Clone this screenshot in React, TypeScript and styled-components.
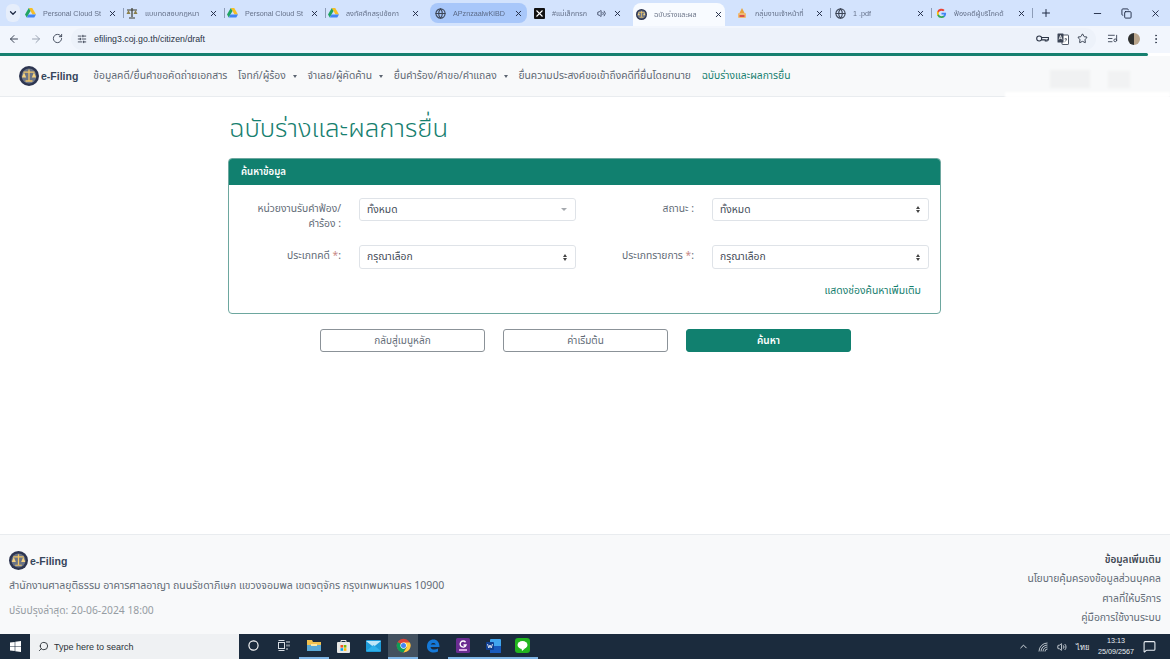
import React from "react";
import styled, { createGlobalStyle } from "styled-components";
import { ArrowLeft, ArrowRight, RotateCw, SlidersHorizontal, Star, ListMusic, EllipsisVertical, X, Plus, Minus, Copy, Volume2, Globe, Search, ChevronUp, MessageSquare, Circle, ChevronDown } from "lucide-react";

const thai = `"Noto Sans Thai", "Noto Sans", "Open Sans", "DejaVu Sans", sans-serif`;

const Global = createGlobalStyle`
  html, body { margin: 0; padding: 0; background: #fff; }
  * { box-sizing: border-box; }
  body { font-family: ${thai}; overflow: hidden; }
`;

const Page = styled.div`
  width: 1170px; height: 659px; display: flex; flex-direction: column; overflow: hidden;
`;
const TabStrip = styled.div`
  height: 26px; background: #d3e3fd; display: flex; align-items: center; padding-left: 6px;
`;
const Chevron = styled.div`
  width: 14px; height: 18px; color: #1f2a44; display: flex; align-items: center; justify-content: center;
  background: #e6eefb; border-radius: 6px;
`;
const Tab = styled.div<{ $active?: boolean; $hl?: boolean; $pad: number; $sep?: boolean }>`
  position: relative; flex: none;
  width: ${p => (p.$active ? "92px" : p.$hl ? "97px" : "101px")};
  margin-left: ${p => (p.$active ? "7px" : p.$hl ? "6px" : "0")};
  margin-right: ${p => (p.$active ? "2px" : p.$hl ? "-2px" : "0")};
  height: ${p => (p.$active ? "23px" : "20px")}; margin-top: ${p => (p.$active ? "3px" : "0")};
  display: flex; align-items: center; gap: 7px; padding: 0 ${p => (p.$active ? 2 : 4)}px 0 ${p => p.$pad}px; font-size: 7.2px; color: #47526a;
  white-space: nowrap; font-family: "Liberation Sans", ${thai};
  background: ${p => (p.$active ? "#f8fbff" : p.$hl ? "#a8c7fa" : "transparent")};
  border-radius: ${p => (p.$active ? "8px 8px 0 0" : p.$hl ? "8px" : "0")};
  &::after {
    content: ""; display: ${p => (p.$sep ? "block" : "none")}; position: absolute; right: -3px; top: 5px; height: 10px; width: 1px; background: #8d9db8;
  }
  svg { flex: none; }
`;
const TabTitle = styled.span`
  flex: 1; min-width: 0; opacity: .8;
`;
const TabClose = styled(X)`
  width: 9px; height: 9px; color: #1f2a44; stroke-width: 2.5;
`;
const TabPlus = styled(Plus)`
  width: 12px; height: 12px; color: #1f2a44; margin-left: 10px;
`;
const WindowBtns = styled.div`
  margin-left: auto; display: flex; align-items: center; gap: 18px; padding-right: 9px; color: #1f2a44;
  svg { width: 11px; height: 11px; }
`;
const Toolbar = styled.div`
  height: 27px; background: #f2f6fd; display: flex; align-items: center; padding: 0 0 2px 8px; color: #3c4556;
  svg { flex: none; }
`;
const ToolGroup = styled.div`
  display: flex; align-items: center; gap: 10px;
`;
const UrlBar = styled.div`
  flex: 1; height: 22px; margin: 0 8px 0 8px; border-radius: 11px; display: flex; align-items: center;
  gap: 7px; padding: 0 8px 0 6px; background: #edf2fa; font-size: 8.8px; color: #2b3445; font-family: "Liberation Sans", sans-serif;
`;
const UrlEnd = styled.div`
  margin-left: auto; display: flex; align-items: center; gap: 8px;
`;
const ToolEnd = styled.div`
  display: flex; align-items: center; gap: 10px; padding-right: 8px; margin-left: 3px;
`;
const Avatar = styled.span`
  width: 12px; height: 12px; border-radius: 50%; background: linear-gradient(90deg, #2f3130 50%, #b9a58c 50%);
`;
const GreenLine = styled.div`
  height: 3px; background: #17806f; margin-right: 22px; border-radius: 0 2px 2px 0;
`;
const Nav = styled.nav`
  height: 41px; background: #f8f9fa; border-bottom: 1px solid #e9ecef; display: flex; align-items: center;
  padding-left: 19px; position: relative;
`;
const Brand = styled.div`
  display: flex; align-items: center; gap: 2px; font: bold 10.5px "Liberation Sans", sans-serif; color: #36465c;
`;
const NavLinks = styled.div`
  display: flex; align-items: center; margin-left: 15px; gap: 10.7px;
`;
const NavLink = styled.span<{ $on?: boolean }>`
  font-size: 10.3px; color: ${p => (p.$on ? "#17806f" : "#5f6873")}; display: flex; align-items: center; gap: 7px; white-space: nowrap;
`;
const Caret = styled.i`
  width: 0; height: 0; border-left: 2.5px solid transparent; border-right: 2.5px solid transparent; border-top: 3px solid #5b6470;
`;
const Smudge = styled.div<{ $x: number; $w: number; $y: number; $h: number; $c: string }>`
  position: absolute; left: ${p => p.$x}px; width: ${p => p.$w}px; top: ${p => p.$y}px; height: ${p => p.$h}px; background: ${p => p.$c}; filter: blur(1px);
`;
const Main = styled.main`
  flex: 1; width: 713px; margin-left: 228px; display: flex; flex-direction: column; min-height: 0;
`;
const Title = styled.h1`
  margin: 16px 0 12px; font-size: 25.7px; line-height: 33px; font-weight: 300; color: #17806f; padding-left: 1px; white-space: nowrap;
`;
const Card = styled.section`
  height: 156px; border: 1px solid #6da79f; border-radius: 4px; display: flex; flex-direction: column; overflow: hidden;
`;
const CardHead = styled.div`
  height: 27px; margin: -1px -1px 0; background: #11806f; color: #fff; font-size: 9.6px; font-weight: 600; padding: 0 13px; display: flex; align-items: center;
`;
const FormGrid = styled.div`
  display: grid; grid-template-columns: 100px 217px 100px 217px; column-gap: 18px; row-gap: 13px; padding: 13px 0 0 12px;
`;
const Label = styled.label`
  font-size: 10.3px; line-height: 15px; color: #636c77; text-align: right; padding-top: 4px; white-space: nowrap;
`;
const Star2 = styled.span`
  color: #c98a88;
`;
const Select = styled.div<{ $h?: number }>`
  height: ${p => p.$h ?? 23}px; border: 1px solid #dfe3e8; border-radius: 3px; background: #fff; display: flex; align-items: center; justify-content: space-between;
  padding: 0 8px 0 7px; font-size: 10.3px; color: #444c58;
`;
const UpDown = styled.span`
  display: flex; flex-direction: column; gap: 1px;
  &::before, &::after { content: ""; width: 0; height: 0; border-left: 2.5px solid transparent; border-right: 2.5px solid transparent; }
  &::before { border-bottom: 3px solid #444; }
  &::after { border-top: 3px solid #444; }
`;
const DownOnly = styled.span`
  width: 0; height: 0; border-left: 3px solid transparent; border-right: 3px solid transparent; border-top: 3px solid #a5a9ae;
`;
const MoreLink = styled.div`
  font-size: 10.4px; color: #17806f; text-align: right; padding: 14px 19px 0 0;
`;
const Actions = styled.div`
  display: flex; justify-content: center; gap: 18px; margin-top: 15px; padding-left: 2px;
`;
const Button = styled.div<{ $primary?: boolean }>`
  width: 165px; height: 23px; border-radius: 3px; display: flex; align-items: center; justify-content: center; font-size: 10px;
  border: 1px solid ${p => (p.$primary ? "#11806f" : "#8b9298")};
  background: ${p => (p.$primary ? "#11806f" : "#fff")};
  color: ${p => (p.$primary ? "#fff" : "#636c77")};
  font-weight: ${p => (p.$primary ? 600 : 400)};
`;
const Footer = styled.footer`
  height: 100px; flex: none; background: #f8f9fa; border-top: 1px solid #e9ecef; display: flex; justify-content: space-between; padding: 16px 9px 0 9px;
`;
const FootLeft = styled.div`
  display: flex; flex-direction: column; align-items: flex-start;
`;
const Address = styled.div`
  font-size: 10.5px; color: #636c77; margin-top: 8px; line-height: 16px;
`;
const Updated = styled.div`
  font-size: 10.3px; color: #969ca3; margin-top: 9px; line-height: 16px;
`;
const FootRight = styled.div`
  display: flex; flex-direction: column; align-items: flex-end; gap: 4px; font-size: 10.35px; line-height: 15.5px; color: #636c77; margin-top: 1.5px;
`;
const FootHead = styled.b`
  font-weight: 600; color: #3f4853; font-size: 10px;
`;
const Taskbar = styled.div`
  height: 25px; flex: none; background: #1b2b3d; display: flex; align-items: center; color: #fff;
`;
const StartBtn = styled.div`
  width: 30px; height: 25px; display: flex; align-items: center; justify-content: center;
`;
const SearchBox = styled.div`
  width: 209px; height: 25px; background: #eff1f3; color: #2c3238; display: flex; align-items: center; gap: 5px; padding-left: 8px;
  font: 9px "Liberation Sans", sans-serif;
`;
const TaskIcons = styled.div`
  display: flex; align-items: center; height: 25px;
`;
const TaskItem = styled.div<{ $on?: boolean; $run?: boolean }>`
  width: 29.9px; height: 25px; display: flex; align-items: center; justify-content: center;
  background: ${p => (p.$on ? "#43515f" : "transparent")};
  border-bottom: 2px solid ${p => (p.$run ? "#7eb5e6" : "transparent")};
`;
const Tray = styled.div`
  margin-left: auto; display: flex; align-items: center; gap: 9px; padding-right: 14px; font: 7.5px "Liberation Sans", "Noto Sans", sans-serif; color: #e8edf2;
`;
const Clock = styled.div`
  text-align: center; line-height: 10.5px; font-size: 7.2px; width: 36px;
`;

const Logo = ({ size }: { size: number }) => (
  <svg width={size} height={size} viewBox="0 0 20 20">
    <circle cx="10" cy="10" r="10" fill="#2d3550" />
    <circle cx="10" cy="10" r="7.4" fill="#6b7486" />
    <path d="M10 3.5v11M4.5 6.2h11M6.500 15h7" stroke="#f0c466" strokeWidth="1.3" fill="none" />
    <path d="M2.800 11.500 5 6.200 7.200 11.500Z M12.800 11.500 15 6.200 17.200 11.500Z" fill="#f5d27e" />
  </svg>
);
const Drive = () => (
  <svg width="11" height="10" viewBox="0 0 22 20">
    <path d="M7.500 0h7L22 13h-7z" fill="#f6bf26" />
    <path d="M7.500 0 0 13l3.500 6 7.500-13z" fill="#1fa463" />
    <path d="M3.500 19h15l3.500-6H7z" fill="#4285f4" />
  </svg>
);
const Scale = () => (
  <svg width="12" height="12" viewBox="0 0 12 12">
    <path d="M6 1v9M1 3h10M3 11h6" stroke="#3a3a2c" strokeWidth="1.2" />
    <path d="M.5 7 2.500 3 4.500 7ZM7.500 7 9.500 3 11.500 7Z" fill="#8a7f4a" />
  </svg>
);
const XLogo = () => (
  <svg width="11" height="11" viewBox="0 0 11 11">
    <rect width="11" height="11" rx="1" fill="#111" />
    <path d="M2.500 2.500 8.500 8.500M8.500 2.500 2.500 8.500" stroke="#fff" strokeWidth="1.1" />
  </svg>
);
const Temple = () => (
  <svg width="12" height="12" viewBox="0 0 12 12">
    <path d="M6 1 8.500 6h-5z" fill="#e6a23c" />
    <rect x="2" y="6" width="8" height="5" rx="1" fill="#efbb72" />
    <rect x="3.500" y="8" width="5" height="2" fill="#d9534f" />
  </svg>
);
const GLogo = () => (
  <svg width="11" height="11" viewBox="0 0 24 24">
    <path d="M22 12.200c0-.7-.1-1.400-.2-2H12v3.900h5.600a4.800 4.800 0 0 1-2.100 3.100v2.600h3.300c2-1.800 3.200-4.500 3.200-7.600z" fill="#4285f4" />
    <path d="M12 22c2.800 0 5.100-.9 6.800-2.500l-3.300-2.600c-.9.600-2.100 1-3.500 1-2.700 0-5-1.800-5.800-4.300H2.800v2.600A10 10 0 0 0 12 22z" fill="#34a853" />
    <path d="M6.200 13.600a6 6 0 0 1 0-3.800V7.200H2.800a10 10 0 0 0 0 9z" fill="#fbbc05" />
    <path d="M12 5.800c1.500 0 2.800.5 3.900 1.500L18.800 4.400A10 10 0 0 0 2.800 7.200l3.400 2.600C7 7.500 9.300 5.800 12 5.800z" fill="#ea4335" />
  </svg>
);
const SiteGlobe = () => <Globe size={11} color="#3c4556" strokeWidth={2.4} />;

const PasswordKey = () => (
  <svg width="13" height="9" viewBox="0 0 13 9" fill="none" stroke="currentColor" strokeWidth="1.1">
    <circle cx="3.200" cy="4.500" r="2.500" />
    <path d="M5.700 3.500h6.700v2.400H11V7H9.300V5.900H5.700" />
  </svg>
);
const TranslateIcon = () => (
  <svg width="12" height="12" viewBox="0 0 12 12">
    <rect x="5" y="2" width="6.500" height="9.500" rx=".6" fill="#fff" stroke="#3c4556" strokeWidth=".9" />
    <rect x=".5" y=".5" width="6" height="9" rx=".6" fill="#3c4556" />
    <path d="M2 6.500 3.500 2.500 5 6.500M2.500 5.300h2" stroke="#fff" strokeWidth=".8" fill="none" />
    <path d="M7.500 6h2.500M8.700 5v1M9.500 6c-.3 1.500-1 2.300-1.800 2.800" stroke="#3c4556" strokeWidth=".7" fill="none" />
  </svg>
);

const WinLogo = () => (
  <svg width="11" height="11" viewBox="0 0 11 11" fill="#fff">
    <path d="M0 1.600 4.700.9v4.300H0zM5.300.8 11 0v5.200H5.300zM0 5.800h4.700v4.300L0 9.400zM5.300 5.800H11V11l-5.700-.8z" />
  </svg>
);
const TaskView = () => (
  <svg width="12" height="11" viewBox="0 0 12 11" fill="none" stroke="#d7dde3" strokeWidth="1">
    <rect x=".5" y="2.500" width="6" height="6" />
    <path d="M.5.500h6M.5 10.500h6M9 1v2M9 4.500v2M9 8v2M11 1v2M11 4.500v2" />
  </svg>
);
const Explorer = () => (
  <svg width="14" height="13" viewBox="0 0 14 13">
    <path d="M0 1h5l1 2h8v9H0z" fill="#f2c14e" />
    <rect x="0" y="6" width="14" height="6" fill="#5aa9d6" />
    <rect x="4" y="5" width="6" height="2" fill="#fbe7a5" />
  </svg>
);
const StoreIcon = () => (
  <svg width="13" height="14" viewBox="0 0 13 14">
    <rect y="3" width="13" height="11" rx="1" fill="#e8e8e6" />
    <path d="M4 4V1.500h5V4" fill="none" stroke="#e8e8e6" />
    <rect x="3.500" y="6" width="2.600" height="2.600" fill="#f25022" /><rect x="6.800" y="6" width="2.600" height="2.600" fill="#7fba00" />
    <rect x="3.500" y="9.200" width="2.600" height="2.600" fill="#00a4ef" /><rect x="6.800" y="9.200" width="2.600" height="2.600" fill="#ffb900" />
  </svg>
);
const Mail = () => (
  <svg width="15" height="12" viewBox="0 0 15 12">
    <rect width="15" height="12" rx="1" fill="#1e9bd8" />
    <path d="M0 1 7.500 7 15 1" fill="#bfe6f8" />
    <path d="M0 11 7.500 5 15 11" fill="#2fb1ea" />
  </svg>
);
const Chrome = () => (
  <svg width="15" height="15" viewBox="0 0 24 24">
    <circle cx="12" cy="12" r="11" fill="#db4437" />
    <path d="M12 12 2.500 6.500A11 11 0 0 0 12 23l5-8z" fill="#0f9d58" />
    <path d="M12 7h10.200A11 11 0 0 1 12 23l5-8z" fill="#ffcd40" />
    <circle cx="12" cy="12" r="5" fill="#fff" /><circle cx="12" cy="12" r="4" fill="#4285f4" />
  </svg>
);
const Edge = () => (
  <svg width="14" height="14" viewBox="0 0 14 14">
    <path d="M1 7.500C1 3 4 .5 7.500.5 11 .5 13.500 3 13.500 8H4.500c.3 2.600 4 3.400 7.500 1.600v3C8 14.500 1 13.500 1 7.500zM4.600 5.600h5.200C9.500 3.400 5.400 3.400 4.600 5.600z" fill="#1579d8" />
  </svg>
);
const AppG = () => (
  <svg width="14" height="15" viewBox="0 0 14 15">
    <rect width="14" height="15" rx="1.500" fill="#6a2c91" />
    <path d="M9.500 4.200A3 3 0 1 0 10 7H7.500" fill="none" stroke="#fff" strokeWidth="1.400" />
    <rect x="3" y="11" width="8" height="2" fill="#d9a6e8" />
  </svg>
);
const Word = () => (
  <svg width="15" height="14" viewBox="0 0 15 14">
    <rect x="4" width="11" height="14" rx="1" fill="#41a5ee" />
    <rect x="4" y="7" width="11" height="7" fill="#185abd" />
    <rect y="3" width="8" height="8" rx="1" fill="#103f91" />
    <path d="M1.500 5 2.800 9 4 6 5.200 9 6.500 5" stroke="#fff" strokeWidth=".8" fill="none" />
  </svg>
);
const LineApp = () => (
  <svg width="15" height="15" viewBox="0 0 15 15">
    <rect width="15" height="15" rx="3" fill="#21b51f" />
    <ellipse cx="7.500" cy="7" rx="5" ry="4" fill="#fff" />
    <path d="M6.500 10.500 7 13l3-2.500z" fill="#fff" />
  </svg>
);
const Signal = () => (
  <svg width="10" height="10" viewBox="0 0 10 10" fill="none" stroke="#cfd6dd" strokeWidth=".9">
    <path d="M1 9.500A8.500 8.500 0 0 1 9.500 1M3 9.500A6.500 6.500 0 0 1 9.500 3M5 9.500A4.500 4.500 0 0 1 9.500 5M7 9.500A2.500 2.500 0 0 1 9.500 7" />
  </svg>
);

const tabs: { icon: React.ReactNode; title: string; pad: number; active?: boolean; hl?: boolean; sound?: boolean; sep?: boolean }[] = [
  { icon: <Drive />, title: "Personal Cloud St", pad: 5, sep: true },
  { icon: <Scale />, title: "แบบทดสอบกฎหมา", pad: 5, sep: true },
  { icon: <Drive />, title: "Personal Cloud St", pad: 5, sep: true },
  { icon: <Drive />, title: "ลงทัศศึกสรุปข้อกา", pad: 5 },
  { icon: <SiteGlobe />, title: "APznzaalwKiBD", pad: 5, hl: true },
  { icon: <XLogo />, title: "#แม่เล็กทรก", pad: 9, sound: true },
  { icon: <Logo size={11} />, title: "ฉบับร่างและผล", pad: 3, active: true },
  { icon: <Temple />, title: "กลุ่มงานเจ้าหน้าที่", pad: 9, sep: true },
  { icon: <SiteGlobe />, title: "1 .pdf", pad: 7, sep: true },
  { icon: <GLogo />, title: "ฟ้องคดีผู้บริโภคด้", pad: 7, sep: true },
];

const menu: { label: string; caret?: boolean; on?: boolean }[] = [
  { label: "ข้อมูลคดี/ยื่นคำขอคัดถ่ายเอกสาร" },
  { label: "โจทก์/ผู้ร้อง", caret: true },
  { label: "จำเลย/ผู้คัดค้าน", caret: true },
  { label: "ยื่นคำร้อง/คำขอ/คำแถลง", caret: true },
  { label: "ยื่นความประสงค์ขอเข้าถึงคดีที่ยื่นโดยทนาย" },
  { label: "ฉบับร่างและผลการยื่น", on: true },
];

const taskApps: { icon: React.ReactNode; on?: boolean; run?: boolean }[] = [
  { icon: <Circle size={11} strokeWidth={2.5} color="#fff" /> },
  { icon: <TaskView /> },
  { icon: <Explorer />, run: true },
  { icon: <StoreIcon /> },
  { icon: <Mail /> },
  { icon: <Chrome />, on: true, run: true },
  { icon: <Edge /> },
  { icon: <AppG />, run: true },
  { icon: <Word />, run: true },
  { icon: <LineApp />, run: true },
];

const SearchFlipped = styled(Search)`
  transform: scaleX(-1);
`;

export default function App() {
  return (
    <Page>
      <Global />
      <TabStrip>
        <Chevron><ChevronDown size={10} strokeWidth={3} /></Chevron>
        {tabs.map(t => (
          <Tab key={t.title + t.pad} $active={t.active} $hl={t.hl} $pad={t.pad} $sep={t.sep}>
            {t.icon}
            <TabTitle>{t.title}</TabTitle>
            {t.sound && <Volume2 size={9} color="#1f2a44" />}
            <TabClose />
          </Tab>
        ))}
        <TabPlus />
        <WindowBtns><Minus /><Copy /><X /></WindowBtns>
      </TabStrip>
      <Toolbar>
        <ToolGroup>
          <ArrowLeft size={12} />
          <ArrowRight size={12} color="#9aa3b2" />
          <RotateCw size={11} />
        </ToolGroup>
        <UrlBar>
          <SlidersHorizontal size={10} />
          efiling3.coj.go.th/citizen/draft
          <UrlEnd>
            <PasswordKey />
            <TranslateIcon />
            <Star size={11} />
          </UrlEnd>
        </UrlBar>
        <ToolEnd>
          <ListMusic size={11} />
          <Avatar />
          <EllipsisVertical size={12} />
        </ToolEnd>
      </Toolbar>
      <GreenLine />
      <Nav>
        <Brand><Logo size={20} />e-Filing</Brand>
        <NavLinks>
          {menu.map(m => (
            <NavLink key={m.label} $on={m.on}>{m.label}{m.caret && <Caret />}</NavLink>
          ))}
        </NavLinks>
        <Smudge $x={1050} $w={40} $y={14} $h={18} $c="#f0f1f2" />
        <Smudge $x={1108} $w={22} $y={15} $h={17} $c="#f1f2f3" />
        <Smudge $x={1005} $w={165} $y={36} $h={6} $c="#ffffff" />
      </Nav>
      <Main>
        <Title>ฉบับร่างและผลการยื่น</Title>
        <Card>
          <CardHead>ค้นหาข้อมูล</CardHead>
          <FormGrid>
            <Label>หน่วยงานรับคำฟ้อง/<br />คำร้อง :</Label>
            <Select>ทั้งหมด<DownOnly /></Select>
            <Label>สถานะ :</Label>
            <Select>ทั้งหมด<UpDown /></Select>
            <Label>ประเภทคดี <Star2>*</Star2>:</Label>
            <Select $h={24}>กรุณาเลือก<UpDown /></Select>
            <Label>ประเภทรายการ <Star2>*</Star2>:</Label>
            <Select $h={24}>กรุณาเลือก<UpDown /></Select>
          </FormGrid>
          <MoreLink>แสดงช่องค้นหาเพิ่มเติม</MoreLink>
        </Card>
        <Actions>
          <Button>กลับสู่เมนูหลัก</Button>
          <Button>ค่าเริ่มต้น</Button>
          <Button $primary>ค้นหา</Button>
        </Actions>
      </Main>
      <Footer>
        <FootLeft>
          <Brand><Logo size={19} />e-Filing</Brand>
          <Address>สำนักงานศาลยุติธรรม อาคารศาลอาญา ถนนรัชดาภิเษก แขวงจอมพล เขตจตุจักร กรุงเทพมหานคร 10900</Address>
          <Updated>ปรับปรุงล่าสุด: 20-06-2024 18:00</Updated>
        </FootLeft>
        <FootRight>
          <FootHead>ข้อมูลเพิ่มเติม</FootHead>
          <span>นโยบายคุ้มครองข้อมูลส่วนบุคคล</span>
          <span>ศาลที่ให้บริการ</span>
          <span>คู่มือการใช้งานระบบ</span>
        </FootRight>
      </Footer>
      <Taskbar>
        <StartBtn><WinLogo /></StartBtn>
        <SearchBox><SearchFlipped size={11} />Type here to search</SearchBox>
        <TaskIcons>
          {taskApps.map((a, i) => (
            <TaskItem key={i} $on={a.on} $run={a.run}>{a.icon}</TaskItem>
          ))}
        </TaskIcons>
        <Tray>
          <ChevronUp size={11} />
          <Signal />
          <Volume2 size={10} />
          <span>ไทย</span>
          <Clock>13:13<br />25/09/2567</Clock>
          <MessageSquare size={13} />
        </Tray>
      </Taskbar>
    </Page>
  );
}
